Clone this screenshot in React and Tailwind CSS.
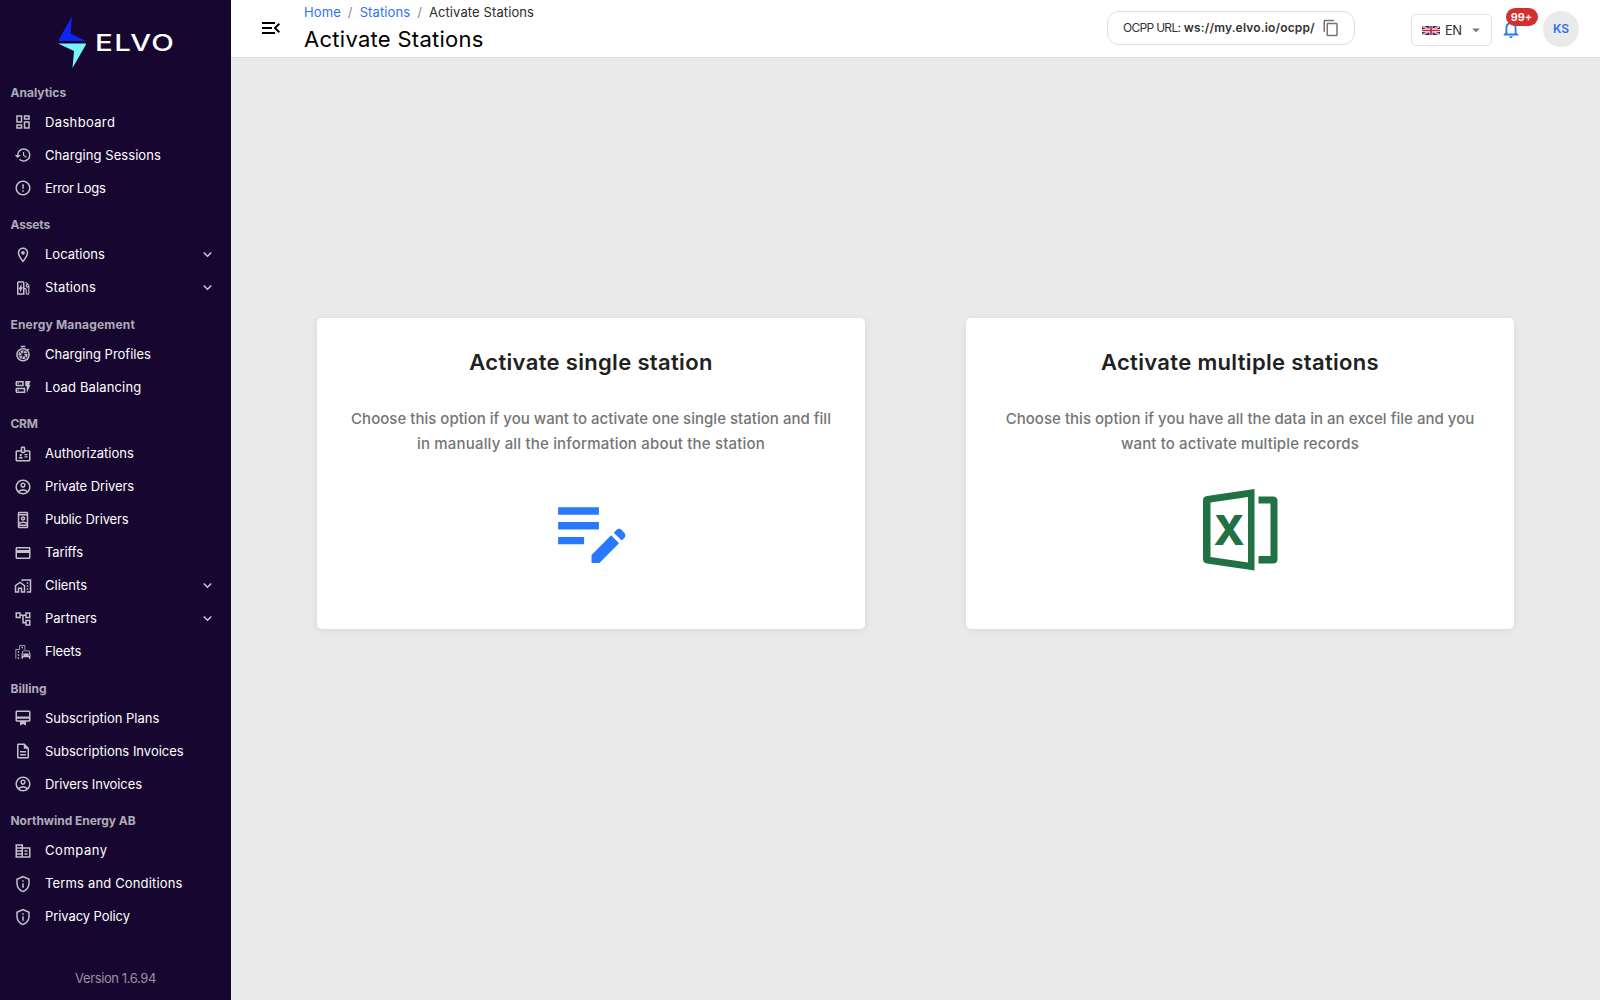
import {
  MdArrowDropDown,
  MdContentCopy,
  MdErrorOutline,
  MdExpandMore,
  MdHistory,
  MdMenuOpen,
  MdNotificationsNone,
  MdOutlineAccountCircle,
  MdOutlineAccountTree,
  MdOutlineBadge,
  MdOutlineCardMembership,
  MdOutlineCorporateFare,
  MdOutlineCreditCard,
  MdOutlineDashboard,
  MdOutlineDescription,
  MdOutlineDynamicForm,
  MdOutlineEditNote,
  MdOutlineEmojiTransportation,
  MdOutlineEvStation,
  MdOutlineHomeWork,
  MdOutlineLocationOn,
  MdOutlinePrivacyTip,
  MdOutlineRememberMe,
  MdOutlineShutterSpeed,
} from 'react-icons/md';

const NAV = [
  {
    title: 'Analytics',
    items: [
      { label: 'Dashboard', icon: MdOutlineDashboard, tracking: 'tracking-[0.35px]' },
      { label: 'Charging Sessions', icon: MdHistory, tracking: 'tracking-[0.07px]' },
      { label: 'Error Logs', icon: MdErrorOutline, tracking: 'tracking-[-0.35px]' },
    ],
  },
  {
    title: 'Assets',
    tracking: 'tracking-[-0.15px]',
    items: [
      { label: 'Locations', icon: MdOutlineLocationOn, expandable: true },
      { label: 'Stations', icon: MdOutlineEvStation, expandable: true, tracking: 'tracking-[0.15px]' },
    ],
  },
  {
    title: 'Energy Management',
    tracking: 'tracking-[0.18px]',
    items: [
      { label: 'Charging Profiles', icon: MdOutlineShutterSpeed },
      { label: 'Load Balancing', icon: MdOutlineDynamicForm, tracking: 'tracking-[0.14px]' },
    ],
  },
  {
    title: 'CRM',
    tracking: 'tracking-[-0.3px]',
    items: [
      { label: 'Authorizations', icon: MdOutlineBadge },
      { label: 'Private Drivers', icon: MdOutlineAccountCircle, tracking: 'tracking-[-0.1px]' },
      { label: 'Public Drivers', icon: MdOutlineRememberMe, tracking: 'tracking-[-0.13px]' },
      { label: 'Tariffs', icon: MdOutlineCreditCard, tracking: 'tracking-[-0.1px]' },
      { label: 'Clients', icon: MdOutlineHomeWork, expandable: true },
      { label: 'Partners', icon: MdOutlineAccountTree, expandable: true },
      { label: 'Fleets', icon: MdOutlineEmojiTransportation, tracking: 'tracking-[-0.1px]' },
    ],
  },
  {
    title: 'Billing',
    items: [
      { label: 'Subscription Plans', icon: MdOutlineCardMembership },
      { label: 'Subscriptions Invoices', icon: MdOutlineDescription },
      { label: 'Drivers Invoices', icon: MdOutlineAccountCircle, tracking: 'tracking-[-0.1px]' },
    ],
  },
  {
    title: 'Northwind Energy AB',
    tracking: 'tracking-[-0.04px]',
    items: [
      { label: 'Company', icon: MdOutlineCorporateFare, tracking: 'tracking-[0.55px]' },
      { label: 'Terms and Conditions', icon: MdOutlinePrivacyTip, tracking: 'tracking-[0.16px]' },
      { label: 'Privacy Policy', icon: MdOutlinePrivacyTip, tracking: 'tracking-[-0.08px]' },
    ],
  },
];

function Logo() {
  return (
    <div className="flex h-[72px] shrink-0 items-start pt-4 pl-[58px]">
      <svg className="h-[52px] w-7 shrink-0" viewBox="0 0 28 52">
        <path d="M14 0.5 0 25h28L12.500 17.500z" fill="#0f25f5" />
        <path d="M0 27.500h28.500L14.500 52l1.500-17z" fill="#77f3fb" />
      </svg>
      <span className="mt-[13px] ml-[9px] origin-left scale-x-[1.28] text-[23px] leading-[28px] font-medium tracking-[1.1px] text-white">
        ELVO
      </span>
    </div>
  );
}

function NavItem({ icon: Icon, label, expandable, tracking = '' }) {
  return (
    <a className="flex h-[33px] items-center pr-[15px] pl-3.5 text-[13px] text-white">
      <Icon className="size-[18px] shrink-0 text-[#c4c1ca]" />
      <span className={`ml-[13px] flex-1 pt-px whitespace-nowrap ${tracking}`}>{label}</span>
      {expandable && <MdExpandMore className="size-[17px] text-[#d0cdd5]" />}
    </a>
  );
}

function Sidebar() {
  return (
    <aside className="flex w-[231px] shrink-0 flex-col bg-[#170730]">
      <Logo />
      <nav>
        {NAV.map(({ title, items, tracking = '' }) => (
          <div key={title}>
            <h2
              className={`flex h-[33.5px] items-center pt-[8px] pl-[10.5px] text-[12px] font-bold whitespace-nowrap text-[#b0abb8] ${tracking}`}
            >
              {title}
            </h2>
            {items.map((item) => (
              <NavItem key={item.label} {...item} />
            ))}
          </div>
        ))}
      </nav>
      <p className="mt-auto pb-3 text-center text-[13px] leading-[19px] tracking-[-0.4px] text-[#98929f]">
        Version 1.6.94
      </p>
    </aside>
  );
}

function UkFlag() {
  return (
    <svg className="h-[9px] w-[18px]" viewBox="0 0 18 9" preserveAspectRatio="none">
      <path d="M0 0h18v9H0z" fill="#1f2a6b" />
      <path d="m0 0 18 9M18 0 0 9" stroke="#fff" strokeWidth="1.800" />
      <path d="m0 0 18 9M18 0 0 9" stroke="#cf1f37" strokeWidth=".6" />
      <path d="M9 0v9M0 4.500h18" stroke="#fff" strokeWidth="3" />
      <path d="M9 0v9M0 4.500h18" stroke="#cf1f37" strokeWidth="1.700" />
    </svg>
  );
}

function Header() {
  return (
    <header className="flex h-[58px] shrink-0 items-start border-b border-[#dcdcdc] bg-white">
      <button className="mt-4 ml-7">
        <MdMenuOpen className="size-6 text-black" />
      </button>
      <div className="ml-[21px] whitespace-nowrap">
        <div className="mt-[3px] flex h-5 items-center gap-[7px] text-[13px] tracking-[0.1px] text-[#2b2b2b]">
          <a className="text-[#2f73f2]">Home</a>
          <span className="text-[#8a8a8a]">/</span>
          <a className="text-[#2f73f2]">Stations</a>
          <span className="text-[#8a8a8a]">/</span>
          <span>Activate Stations</span>
        </div>
        <h1 className="mt-px text-[22px] leading-[31px] tracking-[0.28px] text-black">Activate Stations</h1>
      </div>

      <div className="mr-[21px] ml-auto flex items-start">
        <div className="mt-[11px] flex h-[34px] w-[248px] items-center rounded-[12px] border border-[#dedede] pl-[15px] text-[12px] whitespace-nowrap text-[#333]">
          <span className="tracking-[-0.7px]">OCPP URL:</span>
          <span className="ml-[3.5px] font-semibold tracking-[0.16px]">ws://my.elvo.io/ocpp/</span>
          <MdContentCopy className="ml-[7px] size-[18px] text-[#757575]" />
        </div>
        <button className="mt-3.5 ml-[56px] flex h-8 w-[81px] items-center rounded-[5px] border border-[#e2e2e2] pl-2.5 text-[13px] text-[#333]">
          <UkFlag />
          <span className="ml-[5px] pt-px tracking-[-0.5px]">EN</span>
          <MdArrowDropDown className="ml-[5px] size-[18px] text-[#757575]" />
        </button>
        <div className="relative mt-[18px] ml-[7.5px]">
          <MdNotificationsNone className="size-[22px] text-[#2f78f5]" />
          <span className="absolute -top-[10px] left-[6px] flex h-[18px] w-8 items-center justify-center rounded-full bg-[#d32f2f] text-[11px] font-semibold text-white">
            99+
          </span>
        </div>
        <div className="mt-[11px] ml-[21.5px] flex size-9 items-center justify-center rounded-full bg-[#eaeaea] text-[12px] font-semibold text-[#2f6ff5]">
          KS
        </div>
      </div>
    </header>
  );
}

function ExcelIcon() {
  return (
    <svg className="h-[82px] w-[76px]" viewBox="0 0 76 82">
      <path
        fillRule="evenodd"
        d="M4 7 51.500 0v81.500L4 74.500Q0 74 0 70V11Q0 7.500 4 7zM7.500 13.500v54.500L45 73.500V8z"
        fill="#207245"
      />
      <path d="M55.500 7.500H70Q74.500 7.500 74.500 12V70Q74.500 74.500 70 74.500H55.500V67H67.500V14.500H55.500z" fill="#207245" />
      <text x="26" y="56" textAnchor="middle" fontSize="41" className="font-extrabold" fill="#207245">
        X
      </text>
    </svg>
  );
}

function OptionCard({ title, children }) {
  return (
    <section className="flex h-[311px] w-[548px] flex-col items-center rounded-[5px] bg-white shadow-[0_1px_8px_rgba(0,0,0,0.08)]">
      <h2 className="mt-[29px] text-[22px] leading-[30px] font-semibold tracking-[0.33px] whitespace-nowrap text-[#212121]">
        {title}
      </h2>
      {children}
    </section>
  );
}

export default function App() {
  return (
    <div className="flex h-screen w-full overflow-hidden bg-[#eaeaea] font-['Inter',sans-serif]">
      <Sidebar />
      <div className="flex min-w-0 flex-1 flex-col">
        <Header />
        <main className="flex items-start gap-[101px] pt-[260px] pl-[86px]">
          <OptionCard title="Activate single station">
            <p className="mt-[29px] text-center text-[15px] leading-[25px] font-medium whitespace-nowrap text-[#757575]">
              <span className="tracking-[0.02px]">
                Choose this option if you want to activate one single station and fill
              </span>
              <br />
              <span className="tracking-[0.18px]">in manually all the information about the station</span>
            </p>
            <MdOutlineEditNote className="mt-[29px] size-[89px] text-[#2979ff]" />
          </OptionCard>
          <OptionCard title="Activate multiple stations">
            <p className="mt-[29px] text-center text-[15px] leading-[25px] font-medium whitespace-nowrap text-[#757575]">
              <span className="tracking-[0.03px]">
                Choose this option if you have all the data in an excel file and you
              </span>
              <br />
              <span className="tracking-[0.12px]">want to activate multiple records</span>
            </p>
            <div className="mt-[33px] ml-px">
              <ExcelIcon />
            </div>
          </OptionCard>
        </main>
      </div>
    </div>
  );
}
